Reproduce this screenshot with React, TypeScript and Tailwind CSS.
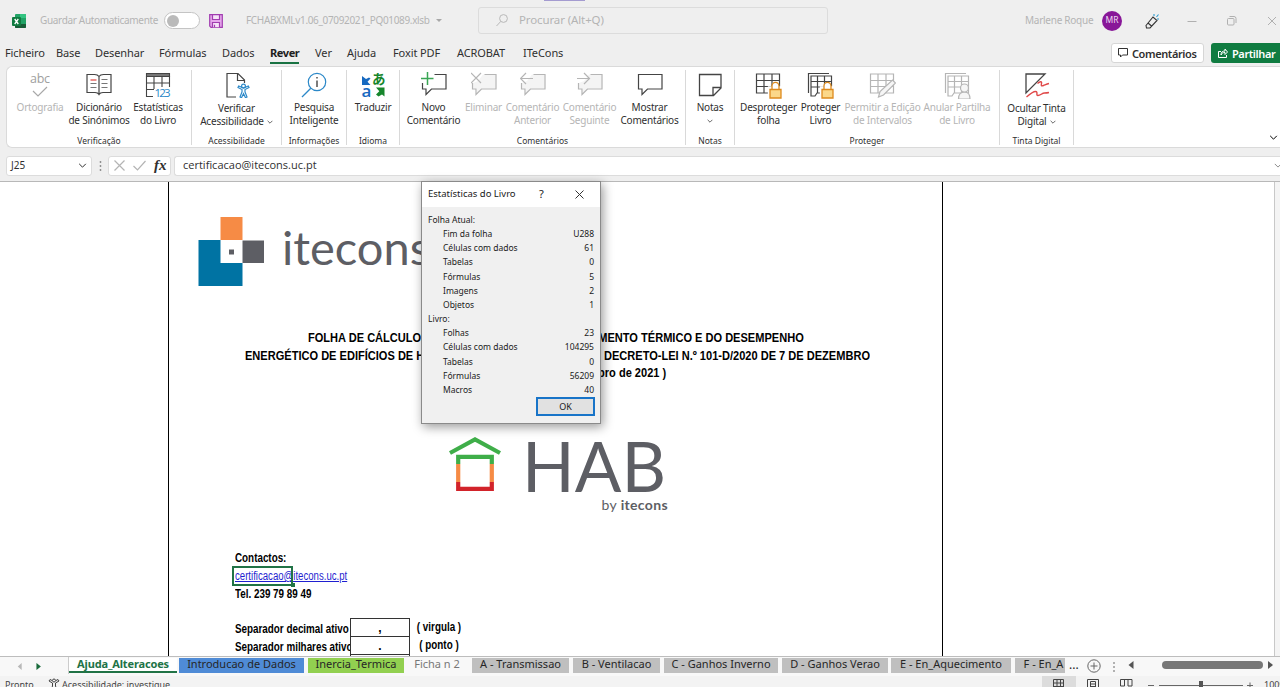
import React from 'react';

const INK = '#444444';
const MUTED = '#b5b5b5';

type IconProps = {
    color?: string;
}

const Chevron = ({ className = '' }: { className?: string }) => (
    <svg viewBox="0 0 10 6" fill="none" stroke="currentColor" strokeWidth="1.2" className={className}>
        <path d="M1 1l4 4 4-4" />
    </svg>
);

// ---- ribbon icons, all on a 26x26 grid ----

const SpellIcon = () => (
    <svg width="26" height="26" viewBox="0 0 26 26" fill="none">
        <text x="13" y="11" textAnchor="middle" fontSize="12.5" fontFamily="Open Sans, sans-serif" fill="#a0a0a0" textLength="20">abc</text>
        <path d="M6 19l5 5 9-9" stroke="#a8a8a8" strokeWidth="1.2" />
    </svg>
);

const BookIcon = () => (
    <svg width="26" height="26" viewBox="0 0 26 26" fill="none" stroke={INK} strokeWidth="1.2">
        <path d="M13 4.5C12 3 10.500 2.500 8.500 2.500H1v18h8c2 0 3.200.6 4 2 .8-1.400 2-2 4-2h8v-18h-7.500c-2 0-3.500.5-4.500 2zM13 4.500v18" />
        <path d="M4.500 8h6" stroke="#e0433f" />
        <path d="M4.500 11.500h6M4.500 15.500h6M15.500 7.500h6M15.500 11.500h6M15.500 15.500h6" stroke="#777" />
    </svg>
);

const StatsIcon = () => (
    <svg width="26" height="26" viewBox="0 0 26 26" fill="none" stroke={INK} strokeWidth="1.100">
        <path d="M1.500 1.500h23v3h-23z" fill="#777" />
        <path d="M24.500 4v11M1.500 4v20.500H8M9 4.500V17M17 4.500V15M1.500 11h23M1.500 17.500H9" />
        <text x="17.500" y="25" textAnchor="middle" fontSize="11.500" fontFamily="Open Sans, sans-serif" fill="#2b88c8" stroke="none" textLength="16">123</text>
    </svg>
);

const AccessIcon = () => (
    <svg width="26" height="26" viewBox="0 0 26 26" fill="none" stroke={INK} strokeWidth="1.200">
        <path d="M12 25H3V1.500h11l6.500 6.500v3M13.500 1.500V8.500h7" />
        <circle cx="19.500" cy="14" r="1.900" stroke="#2b88c8" fill="#fff" />
        <path d="M14 15.500l4 2v2.500l-2 5 1.500.7 2-4 2 4 1.500-.7-2-5v-2.500l4-2-.7-1.500-4.800 2-4.800-2z" stroke="#2b88c8" />
    </svg>
);

const SmartSearchIcon = () => (
    <svg width="26" height="26" viewBox="0 0 26 26" fill="none">
        <circle cx="16" cy="10" r="8.700" stroke="#2b88c8" strokeWidth="1.200" />
        <path d="M9.800 16.200L1 25" stroke="#2b88c8" strokeWidth="1.300" />
        <path d="M16 8.500v6.500M16 5v1.600" stroke={INK} strokeWidth="1.400" />
    </svg>
);

const TranslateIcon = () => (
    <svg width="26" height="26" viewBox="0 0 26 26">
        <path d="M2 4v9h8.500l-3-3.300 3-3.200L9 5.500 6 7 2 4z" fill="#1769c0" />
        <text x="12" y="12" fontSize="13.500" fontWeight="700" fontFamily="Noto Sans CJK JP, sans-serif" fill="#16862c">あ</text>
        <text x="1.500" y="25" fontSize="17" fontWeight="600" fontFamily="Open Sans, sans-serif" fill="#1769c0">a</text>
        <path d="M16 15.500h8.500v9l-2.500-2-3.500 2-2.500-2 3.300-3.300z" fill="#16862c" />
    </svg>
);

const Bubble = ({ color = INK, children }: IconProps & { children?: React.ReactNode }) => (
    <svg width="26" height="26" viewBox="0 0 26 26" fill="none" stroke={color} strokeWidth="1.200">
        {children ? (
            <>
                <path d="M12 2.500h12.500v14H11l-5 5.500v-5.500H2V11l5-2z" fill={color === INK ? '#fff' : '#f4f4f4'} stroke="none" />
                <path d="M13.500 2.500h11.500v14.500H10.500L5 22.500V17H1.500v-6" />
                {children}
            </>
        ) : (
            <path d="M1.500 2.500H25V17H10.500L5 22.500V17H1.500z" />
        )}
    </svg>
);

const NewCommentIcon = () => (
    <Bubble><path d="M6.500 0v13M0 6.500h12.500" stroke="#3aa655" strokeWidth="1.500" /></Bubble>
);
const DeleteCommentIcon = () => (
    <Bubble color={MUTED}><path d="M0 1l10 10M10 1L0 11" /></Bubble>
);
const PrevCommentIcon = () => (
    <Bubble color={MUTED}><path d="M13 6.500H.5M6 1L.5 6.500 6 12" /></Bubble>
);
const NextCommentIcon = () => (
    <Bubble color={MUTED}><path d="M0 6.500h12.500M7 1l5.500 5.500L7 12" /></Bubble>
);
const ShowCommentsIcon = () => <Bubble />;

const NoteIcon = () => (
    <svg width="26" height="26" viewBox="0 0 26 26" fill="none" stroke={INK} strokeWidth="1.300">
        <path d="M2.500 2.500h21.500V16l-7.500 7.500h-14zM24 15.500h-8v8" />
    </svg>
);

const Grid = ({ color = INK }: IconProps) => (
    <path d="M1.500 2h23v19h-23zM1.500 8.500h23M1.500 14.500h23M9 2v19M17 2v19" stroke={color} strokeWidth="1.200" fill="#fff" />
);

const StackedGrid = ({ color = INK }: IconProps) => (
    <g stroke={color} strokeWidth="1.200" fill="none">
        <path d="M1.500 21V1.500H22" />
        <path d="M4 4h20.500v17H10l-2 3H4zM4 9.500h20.500M4 15h20.500M10.500 4v17M17.500 4v17" fill="#fff" />
    </g>
);

const Lock = () => (
    <g strokeWidth="1.300">
        <path d="M13.500 15h13v11.500h-13z" fill="#fff" stroke="#fff" />
        <path d="M17 17.500v-3.500a3.500 3.700 0 017 0v3.500" stroke="#dd8a1e" fill="#fff" />
        <path d="M15 17.500h11v8.500H15z" fill="#fbd88a" stroke="#dd8a1e" />
    </g>
);

const UnprotectIcon = () => (
    <svg width="27" height="27" viewBox="0 0 27 27"><Grid /><Lock /></svg>
);
const ProtectBookIcon = () => (
    <svg width="27" height="27" viewBox="0 0 27 27"><StackedGrid /><Lock /></svg>
);
const EditRangesIcon = () => (
    <svg width="27" height="27" viewBox="0 0 27 27">
        <Grid color={MUTED} />
        <path d="M9.500 25l1.500-5.500L23.500 8l3 3L14.500 23z" fill="#f6f6f6" stroke={MUTED} strokeWidth="1.200" />
    </svg>
);
const UnshareIcon = () => (
    <svg width="27" height="27" viewBox="0 0 27 27">
        <StackedGrid color={MUTED} />
        <path d="M14.500 27c0-5 2-7 6-7s5.500 2 5.500 7z" fill="#f6f6f6" stroke={MUTED} strokeWidth="1.200" />
        <circle cx="20.500" cy="16" r="4" fill="#f6f6f6" stroke={MUTED} strokeWidth="1.200" />
    </svg>
);
const InkIcon = () => (
    <svg width="26" height="26" viewBox="0 0 26 26" fill="none">
        <path d="M2 21V2h19z" stroke={INK} strokeWidth="1.300" />
        <path d="M13.500 11.500c3-2.500 4.500-2 4 0s-.5 3 2 2 3.500-1.500 5.500-2M2.500 25c4-3.500 7-5.500 9-5.500 3 0 0 4 2.500 4s4-2.500 6.500-2.500c1.500 0 2.500 0 4.500-.5" stroke="#e04848" strokeWidth="1.400" />
    </svg>
);

// ---- ribbon ----

type RibbonItem = {
    icon: React.FC;
    lines: string[];
    width: string;
    disabled?: boolean;
    arrow?: boolean;
}

type RibbonGroupData = {
    label: string;
    width: string;
    items: RibbonItem[];
}

const groups: RibbonGroupData[] = [
    {
        label: 'Verificação',
        width: 'w-[185px]',
        items: [
            { icon: SpellIcon, lines: ['Ortografia'], width: 'w-[60px]', disabled: true },
            { icon: BookIcon, lines: ['Dicionário', 'de Sinónimos'], width: 'w-[58px]' },
            { icon: StatsIcon, lines: ['Estatísticas', 'do Livro'], width: 'w-[60px]' },
        ],
    },
    {
        label: 'Acessibilidade',
        width: 'w-[90px]',
        items: [{ icon: AccessIcon, lines: ['Verificar', 'Acessibilidade'], width: 'w-[88px]', arrow: true }],
    },
    {
        label: 'Informações',
        width: 'w-[65px]',
        items: [{ icon: SmartSearchIcon, lines: ['Pesquisa', 'Inteligente'], width: 'w-[62px]' }],
    },
    {
        label: 'Idioma',
        width: 'w-[53px]',
        items: [{ icon: TranslateIcon, lines: ['Traduzir'], width: 'w-[52px]' }],
    },
    {
        label: 'Comentários',
        width: 'w-[286px]',
        items: [
            { icon: NewCommentIcon, lines: ['Novo', 'Comentário'], width: 'w-[58px]' },
            { icon: DeleteCommentIcon, lines: ['Eliminar'], width: 'w-[42px]', disabled: true },
            { icon: PrevCommentIcon, lines: ['Comentário', 'Anterior'], width: 'w-[56px]', disabled: true },
            { icon: NextCommentIcon, lines: ['Comentário', 'Seguinte'], width: 'w-[58px]', disabled: true },
            { icon: ShowCommentsIcon, lines: ['Mostrar', 'Comentários'], width: 'w-[62px]' },
        ],
    },
    {
        label: 'Notas',
        width: 'w-[49px]',
        items: [{ icon: NoteIcon, lines: ['Notas', ''], width: 'w-[48px]', arrow: true }],
    },
    {
        label: 'Proteger',
        width: 'w-[265px]',
        items: [
            { icon: UnprotectIcon, lines: ['Desproteger', 'folha'], width: 'w-[56px]' },
            { icon: ProtectBookIcon, lines: ['Proteger', 'Livro'], width: 'w-[48px]' },
            { icon: EditRangesIcon, lines: ['Permitir a Edição', 'de Intervalos'], width: 'w-[76px]', disabled: true },
            { icon: UnshareIcon, lines: ['Anular Partilha', 'de Livro'], width: 'w-[73px]', disabled: true },
        ],
    },
    {
        label: 'Tinta Digital',
        width: 'w-[74px]',
        items: [{ icon: InkIcon, lines: ['Ocultar Tinta', 'Digital'], width: 'w-[72px]', arrow: true }],
    },
];

const RibbonButton = ({ item }: { item: RibbonItem }) => {
    const Icon = item.icon;
    return (
        <button className={`flex flex-col items-center whitespace-nowrap shrink-0 ${item.width} ${item.disabled ? 'text-[#b5b5b5]' : 'text-[#303030]'}`}>
            <span className="flex h-[29px] items-start"><Icon /></span>
            <span className={`flex flex-col items-center text-[10px] leading-[13px] tracking-[-0.2px] ${item.arrow && item.lines[1] ? 'pt-px' : ''}`}>
                {item.lines.map((line, i) => (
                    <span key={i} className="flex h-[13px] items-center gap-[3px]">
                        {line}
                        {item.arrow && i === 1 && <Chevron className="w-[6px] h-[4px]" />}
                    </span>
                ))}
            </span>
        </button>
    );
};

const Ribbon = () => (
    <div className="ml-[6px] flex h-[82px] shrink-0 rounded-l-[6px] border border-r-0 border-[#dadada] bg-white">
        {groups.map(group => (
            <div key={group.label} className={`relative flex shrink-0 flex-col items-center pr-px pt-[5px] ${group.width}`}>
                <div className="flex h-[63px] justify-center">
                    {group.items.map((item, i) => <RibbonButton key={i} item={item} />)}
                </div>
                <span className="whitespace-nowrap text-[8.500px] leading-[11px] text-[#303030]">{group.label}</span>
                <span className="absolute right-0 top-[3px] h-[75px] w-px bg-[#d9d9d9]" />
            </div>
        ))}
        <div className="flex flex-1 items-end justify-end pb-[7px]">
            <Chevron className="mr-[2px] h-[5px] w-[9px]" />
        </div>
    </div>
);

// ---- top bars ----

const TitleBar = () => (
    <div className="relative flex h-[41px] shrink-0 items-center whitespace-nowrap text-[10px] text-[#b4b4b4]">
        <span className="absolute left-[544px] top-0 h-px w-[41px] bg-[#a49bd0]" />
        <svg width="14" height="14" viewBox="0 0 14 14" className="ml-[12px] shrink-0">
            <rect x="3" width="11" height="14" rx="1" fill="#21a366" />
            <path d="M8 0h5a1 1 0 011 1v3H8z" fill="#33c481" />
            <path d="M3 10h11v3a1 1 0 01-1 1H4a1 1 0 01-1-1z" fill="#185c37" />
            <rect y="3" width="9" height="9" rx="1" fill="#107c41" />
            <path d="M2.700 5l3.600 5M6.300 5l-3.600 5" stroke="#fff" strokeWidth="1.300" />
        </svg>
        <span className="ml-[14px] w-[119px] tracking-[-0.330px]">Guardar Automaticamente</span>
        <div className="ml-[5px] flex h-[17px] w-[36px] items-center rounded-full border border-[#c4c4c4] bg-white pl-[2px]">
            <span className="h-[12px] w-[12px] rounded-full bg-[#bababa]" />
        </div>
        <svg width="14" height="14" viewBox="0 0 14 14" className="ml-[9px] shrink-0" fill="#e6a8ec" stroke="#a13db0" strokeWidth="1.200">
            <path d="M.7.7h12.600v12.600H2L.7 12z" />
            <path d="M3.500.7h7v4.800h-7z" fill="#f6e3f8" />
            <path d="M3.500 13.300V8.500h7v4.800M5.500 13.300v-2.500" fill="#f6e3f8" />
        </svg>
        <span className="ml-[23px] w-[183px] tracking-[-0.340px]">FCHABXMLv1.06_07092021_PQ01089.xlsb</span>
        <span className="ml-[7px] border-x-[3px] border-t-[3px] border-x-transparent border-t-[#a8a8a8]" />
        <div className="ml-[36px] flex h-[27px] w-[350px] shrink-0 items-center rounded-[3px] border border-[#dcdcdc] text-[11.500px] tracking-[-0.120px]">
            <svg width="12" height="13" viewBox="0 0 12 13" className="ml-[17px]" fill="none" stroke="#b8b8b8">
                <circle cx="7.500" cy="4.500" r="3.900" />
                <path d="M4.700 7.500L.5 12" />
            </svg>
            <span className="ml-[11px] -mt-[2px]">Procurar (Alt+Q)</span>
        </div>
        <span className="ml-[197px] w-[69px] shrink-0 tracking-[-0.260px]">Marlene Roque</span>
        <span className="ml-[8px] flex h-[20px] w-[20px] shrink-0 items-center justify-center rounded-full bg-[#881798] text-[8.500px] text-[#eddcef]">MR</span>
        <svg width="15" height="16" viewBox="0 0 15 16" className="ml-[23px] shrink-0" fill="none" stroke="#333" strokeWidth="1.100">
            <path d="M1 12.500l7-8.500 4 3.500-7 7.500H1.500zM3 10l3.500 3" />
            <path d="M9 3V1M11.500 4l2-2.500M12 6h2" stroke="#2b9bd0" />
        </svg>
        <svg width="93" height="12" viewBox="0 0 93 12" className="ml-[26px] shrink-0" fill="none" stroke="#b0b0b0">
            <path d="M1.500 6.500h9M82 2l8 8M90 2l-8 8" />
            <rect x="41.500" y="3.500" width="6.500" height="6.500" rx="1" />
            <path d="M43.500 1.500h4.500a2 2 0 012 2V8" />
        </svg>
    </div>
);

const menuTabs = [
    { name: 'Ficheiro', width: 'w-[51px]' },
    { name: 'Base', width: 'w-[39px]' },
    { name: 'Desenhar', width: 'w-[64px]' },
    { name: 'Fórmulas', width: 'w-[63px]' },
    { name: 'Dados', width: 'w-[48px]' },
    { name: 'Rever', width: 'w-[45px]', active: true },
    { name: 'Ver', width: 'w-[32px]' },
    { name: 'Ajuda', width: 'w-[46px]' },
    { name: 'Foxit PDF', width: 'w-[64px]' },
    { name: 'ACROBAT', width: 'w-[66px]' },
    { name: 'ITeCons', width: 'w-[60px]' },
];

const MenuBar = () => (
    <div className="flex h-[25px] shrink-0 whitespace-nowrap pl-[5px] text-[11px] leading-[15px] tracking-[-0.100px] text-[#303030]">
        {menuTabs.map(tab => (
            <span key={tab.name} className={`shrink-0 pt-[4px] ${tab.width}`}>
                <span className={tab.active ? 'inline-block h-[19px] border-b-2 border-[#1a7343] font-bold tracking-[-0.400px] text-[#202020]' : ''}>{tab.name}</span>
            </span>
        ))}
        <div className="flex flex-1 items-start justify-end gap-[7px] pt-[2px] text-[11px] font-semibold tracking-[-0.400px]">
            <button className="flex h-[20px] w-[93px] items-center gap-[4px] rounded-[3px] border border-[#d6d6d6] bg-white pl-[6px]">
                <svg width="10" height="10" viewBox="0 0 10 10" fill="none" stroke="#333"><path d="M.5.500h9v6.500h-5L2.500 9V7H.5z" /></svg>
                Comentários
            </button>
            <button className="flex h-[20px] w-[69px] items-center gap-[4px] rounded-l-[3px] bg-[#107c41] pl-[7px] text-white">
                <svg width="10" height="10" viewBox="0 0 10 10" fill="none" stroke="#fff"><path d="M3 3.500H.5v6h8V7M3 7c0-3 1.500-4 4-4V1l2.500 3L7 6.500v-2C5 4.500 4 5 3 7z" /></svg>
                Partilhar
            </button>
        </div>
    </div>
);

const FormulaBar = () => (
    <div className="flex h-[34px] shrink-0 items-center border-b border-[#b8b8b8] pl-[6px] pt-[2px] text-[#303030]">
        <div className="flex h-[20px] w-[86px] items-center justify-between rounded-[3px] border border-[#dcdcdc] bg-white pl-[4px] pr-[4px] text-[10px]">
            J25
            <Chevron className="h-[5px] w-[9px]" />
        </div>
        <svg width="3" height="12" viewBox="0 0 3 12" className="ml-[7px]" fill="#888">
            <circle cx="1.500" cy="2" r=".9" /><circle cx="1.500" cy="6" r=".9" /><circle cx="1.500" cy="10" r=".9" />
        </svg>
        <div className="ml-[6px] flex h-[20px] w-[63px] items-center rounded-[3px] border border-[#dcdcdc] bg-white pl-[5px]">
            <svg width="32" height="11" viewBox="0 0 32 11" fill="none" stroke="#b4b4b4" strokeWidth="1.200">
                <path d="M.5.500l10 10M10.500.500l-10 10M19.500 6l4 4L31.500 1" />
            </svg>
            <span className="ml-[8px] -mt-px font-['Liberation_Serif',serif] text-[15px] leading-[16px] font-bold italic">fx</span>
        </div>
        <div className="ml-[3px] flex h-[20px] flex-1 items-center justify-between rounded-l-[3px] border border-r-0 border-[#dcdcdc] bg-white pl-[8px] font-['Open_Sans',sans-serif] text-[11px]">
            certificacao@itecons.uc.pt
            <Chevron className="-mr-[2px] h-[5px] w-[8px] shrink-0 text-[#888]" />
        </div>
    </div>
);

// ---- sheet ----

const IteconsLogo = () => (
    <svg width="66" height="70" viewBox="0 0 66 70" className="shrink-0">
        <path d="M.5 23h22v23h22v23H.5z" fill="#0073a3" />
        <path d="M22.500 0h22v23h-22z" fill="#f68b45" />
        <path d="M44.500 23.500H66V46H44.500z" fill="#5d5e64" />
        <path d="M31 32.500h5v5h-5z" fill="#5d5e64" />
    </svg>
);

const HouseIcon = () => (
    <svg width="52" height="55" viewBox="0 0 52 55" fill="none" strokeWidth="4.200" className="shrink-0">
        <path d="M1 16L26 2.500 51 16" stroke="#3fae49" />
        <path d="M9.200 27v-7.200h33.600V27" stroke="#3fae49" />
        <path d="M9.200 27v18M42.800 27v18" stroke="#f68b45" />
        <path d="M9.200 45v6.800h33.600V45" stroke="#d2232a" />
    </svg>
);

const Worksheet = () => (
    <div className="flex h-[474px] shrink-0 overflow-hidden bg-[#f4f4f4]">
        <div className="flex w-[1275px] border-r border-[#c8c8c8] bg-white">
            <div className="ml-[168px] flex h-[474px] w-[775px] flex-col border-x-[1.500px] border-black font-['Liberation_Sans',sans-serif] text-[13px] font-bold text-black">
                <div className="ml-[29px] mt-[35px] flex h-[70px]">
                    <IteconsLogo />
                    <span className="ml-[18px] mt-[1px] font-['Lato',sans-serif] text-[47px] font-normal leading-[58px] text-[#5d5e64]">itecons</span>
                </div>
                <div className="mt-[42px] flex flex-col whitespace-nowrap leading-[17.500px]">
                    <div className="ml-[139px] flex w-[496px] justify-between">
                        <span className="w-[120px] origin-left scale-x-[.85]">FOLHA DE CÁLCULO</span>
                        <span className="origin-right scale-x-[.85]">MENTO TÉRMICO E DO DESEMPENHO</span>
                    </div>
                    <div className="ml-[76px] flex w-[625px] justify-between">
                        <span className="w-[180px] origin-left scale-x-[.85]">ENERGÉTICO DE EDIFÍCIOS DE H</span>
                        <span className="origin-right scale-x-[.85]">DECRETO-LEI N.º 101-D/2020 DE 7 DE DEZEMBRO</span>
                    </div>
                    <div className="flex w-[497px] justify-end"><span className="origin-right scale-x-[.85]">bro de 2021 )</span></div>
                </div>
                <div className="ml-[280px] mt-[55px] flex h-[120px] font-['Lato',sans-serif] font-normal text-[#5d5e64]">
                    <HouseIcon />
                    <div className="ml-[21px] flex w-[146px] flex-col">
                        <span className="-mt-px text-[69px] leading-[60px]">HAB</span>
                        <span className="self-end whitespace-nowrap pt-px text-[14px] leading-[16px] tracking-[0.350px]">by <b>itecons</b></span>
                    </div>
                </div>
                <div className="ml-[66px] flex flex-col text-[12px] leading-[18px]">
                    <span className="-mt-[7px] w-max origin-left scale-x-[.82]">Contactos:</span>
                    <div className="relative h-[18px]">
                        <span className="inline-block origin-left scale-x-[.8] font-normal text-[#1f1fd0] underline">certificacao@itecons.uc.pt</span>
                        <span className="absolute -left-[3px] -top-px h-[20px] w-[61px] border-2 border-[#217346]" />
                        <span className="absolute left-[56px] top-[16px] h-[4px] w-[4px] bg-[#217346]" />
                    </div>
                    <span className="w-max origin-left scale-x-[.82]">Tel. 239 79 89 49</span>
                    <div className="mt-[15px] flex whitespace-nowrap">
                        <div className="flex w-[115px] flex-col overflow-hidden pt-[2px]">
                            <span className="w-max origin-left scale-x-[.82]">Separador decimal ativo</span>
                            <span className="w-max origin-left scale-x-[.82]">Separador milhares ativo</span>
                        </div>
                        <div className="flex w-[60px] flex-col border border-b-0 border-[#333] text-center">
                            <span className="h-[18px] border-b border-[#333]">,</span>
                            <span className="h-[18px] border-b border-[#333]">.</span>
                        </div>
                        <div className="flex w-[58px] scale-x-[.82] flex-col text-center">
                            <span>( virgula )</span>
                            <span>( ponto )</span>
                        </div>
                    </div>
                </div>
            </div>
        </div>
    </div>
);

// ---- dialog ----

const statistics = [
    { title: 'Folha Atual:', rows: [['Fim da folha', 'U288'], ['Células com dados', '61'], ['Tabelas', '0'], ['Fórmulas', '5'], ['Imagens', '2'], ['Objetos', '1']] },
    { title: 'Livro:', rows: [['Folhas', '23'], ['Células com dados', '104295'], ['Tabelas', '0'], ['Fórmulas', '56209'], ['Macros', '40']] },
];

const StatisticsDialog = () => (
    <div className="absolute left-[421px] top-[181px] flex h-[243px] w-[180px] flex-col border border-[#8a8a8a] bg-[#f0f0f0] text-[#202020] shadow-[2px_3px_10px_rgba(0,0,0,0.4)]">
        <div className="flex h-[25px] shrink-0 items-center bg-white pl-[6px] text-[9.500px]">
            <span className="w-[111px] whitespace-nowrap">Estatísticas do Livro</span>
            <span className="text-[11px]">?</span>
            <svg width="9" height="9" viewBox="0 0 9 9" className="ml-[31px]" stroke="#333"><path d="M.5.500l8 8M8.500.500l-8 8" /></svg>
        </div>
        <div className="flex flex-col pl-[6px] pr-[6px] pt-[6px] text-[8.500px] leading-[14.150px]">
            {statistics.map(section => (
                <React.Fragment key={section.title}>
                    <span>{section.title}</span>
                    {section.rows.map(([label, value]) => (
                        <div key={label} className="flex justify-between pl-[15px]">
                            <span>{label}</span>
                            <span>{value}</span>
                        </div>
                    ))}
                </React.Fragment>
            ))}
        </div>
        <button className="mr-[5px] flex h-[19px] w-[59px] items-center justify-center self-end border-2 border-[#1874c8] bg-[#e1e1e1] text-[9px]">OK</button>
    </div>
);

// ---- bottom bars ----

const sheetTabs = [
    { name: 'Ajuda_Alteracoes', style: 'w-[108px] bg-white font-bold tracking-[-0.150px] text-[#217346] border-b-2 border-[#217346] mr-[2px]' },
    { name: 'Introducao de Dados', style: 'w-[125px] bg-[#4f8bd6] mr-[4px]' },
    { name: 'Inercia_Termica', style: 'w-[96px] bg-[#92d050]' },
    { name: 'Ficha n 2', style: 'w-[66px] text-[#777] mr-[2px]' },
    { name: 'A - Transmissao', style: 'w-[97px] bg-[#bfbfbf] mr-[4px]' },
    { name: 'B - Ventilacao', style: 'w-[87px] bg-[#bfbfbf] mr-[4px]' },
    { name: 'C - Ganhos Inverno', style: 'w-[114px] bg-[#bfbfbf] mr-[4px]' },
    { name: 'D - Ganhos Verao', style: 'w-[106px] bg-[#bfbfbf] mr-[3px]' },
    { name: 'E - En_Aquecimento', style: 'w-[120px] bg-[#bfbfbf] mr-[4px]' },
    { name: 'F - En_A', style: 'w-[50px] bg-[#bfbfbf] pl-[7px]' },
];

const SheetTabs = () => (
    <div className="flex h-[20px] shrink-0 items-start whitespace-nowrap border-t border-[#bdbdbd] bg-[#f8f8f8] text-[11px] leading-[12px] text-[#262626]">
        <svg width="69" height="17" viewBox="0 0 69 17" className="shrink-0 border-r border-[#ccc]">
            <path d="M22 6v7l-4-3.500z" fill="#b8b8b8" />
            <path d="M37 6v7l4.500-3.500z" fill="#1a6b3c" />
        </svg>
        {sheetTabs.map(tab => (
            <span key={tab.name} className={`mt-px flex h-[15px] shrink-0 justify-center overflow-hidden ${tab.style}`}>{tab.name}</span>
        ))}
        <span className="ml-[4px] w-[18px] text-[12px] leading-[16px]">...</span>
        <svg width="190" height="18" viewBox="0 0 190 18" className="shrink-0" fill="none" stroke="#666">
            <circle cx="7" cy="9" r="6.200" />
            <path d="M7 5.500v7M3.500 9h7" />
            <path d="M27 5v2M27 9v2M27 13v2" stroke="#999" strokeWidth="1.500" />
            <path d="M46.500 4v8l-5-4z" fill="#555" stroke="none" />
            <rect x="75" y="4" width="101" height="8" rx="4" fill="#777" stroke="none" />
            <path d="M181 4v8l5-4z" fill="#555" stroke="none" />
        </svg>
    </div>
);

const StatusBar = () => (
    <div className="flex h-[11px] shrink-0 overflow-hidden whitespace-nowrap bg-[#f3f3f3] pl-[5px] text-[9px] leading-[18px] text-[#444]">
        <span className="w-[43px] shrink-0">Pronto</span>
        <svg width="12" height="12" viewBox="0 0 12 12" className="mt-[2px] shrink-0" fill="none" stroke="#444">
            <circle cx="6" cy="2.500" r="1.500" />
            <path d="M1 3l3.500 2v3L3 12M11 3L7.500 5v3L9 12M1 3l1-1.500 2 1M11 3l-1-1.500-2 1" />
        </svg>
        <span className="ml-[2px] flex-1">Acessibilidade: investigue</span>
        <svg width="222" height="12" viewBox="0 0 222 12" className="shrink-0" fill="none" stroke="#444">
            <path d="M0 0h34v12H0z" fill="#dcdcdc" stroke="none" />
            <path d="M11.500 3.500h10V14h-10zM11.500 7h10M11.500 10.500h10M15 3.500V14M18.500 3.500V14" />
            <path d="M45.500 3.500h11V14h-11zM48.500 5.500h5V14h-5zM49 8h4M49 10.500h4" />
            <path d="M78.500 10V3.500h11.500V10h-4M78.500 10h4V3.500M86 3.500V10" />
            <path d="M106 9.500h6M117 9.500h84M205 9.500h6M208 6.500v6" stroke="#666" />
            <path d="M157 5h4v7h-4z" fill="#555" stroke="none" />
        </svg>
        <span className="w-[16px] shrink-0">100%</span>
    </div>
);

const App: React.FC = () => {
    return (
        <div className="relative flex h-[687px] w-[1280px] flex-col overflow-hidden bg-[#efefef] font-['Noto_Sans',sans-serif]">
            <TitleBar />
            <MenuBar />
            <Ribbon />
            <FormulaBar />
            <Worksheet />
            <SheetTabs />
            <StatusBar />
            <StatisticsDialog />
        </div>
    );
};

export default App;
